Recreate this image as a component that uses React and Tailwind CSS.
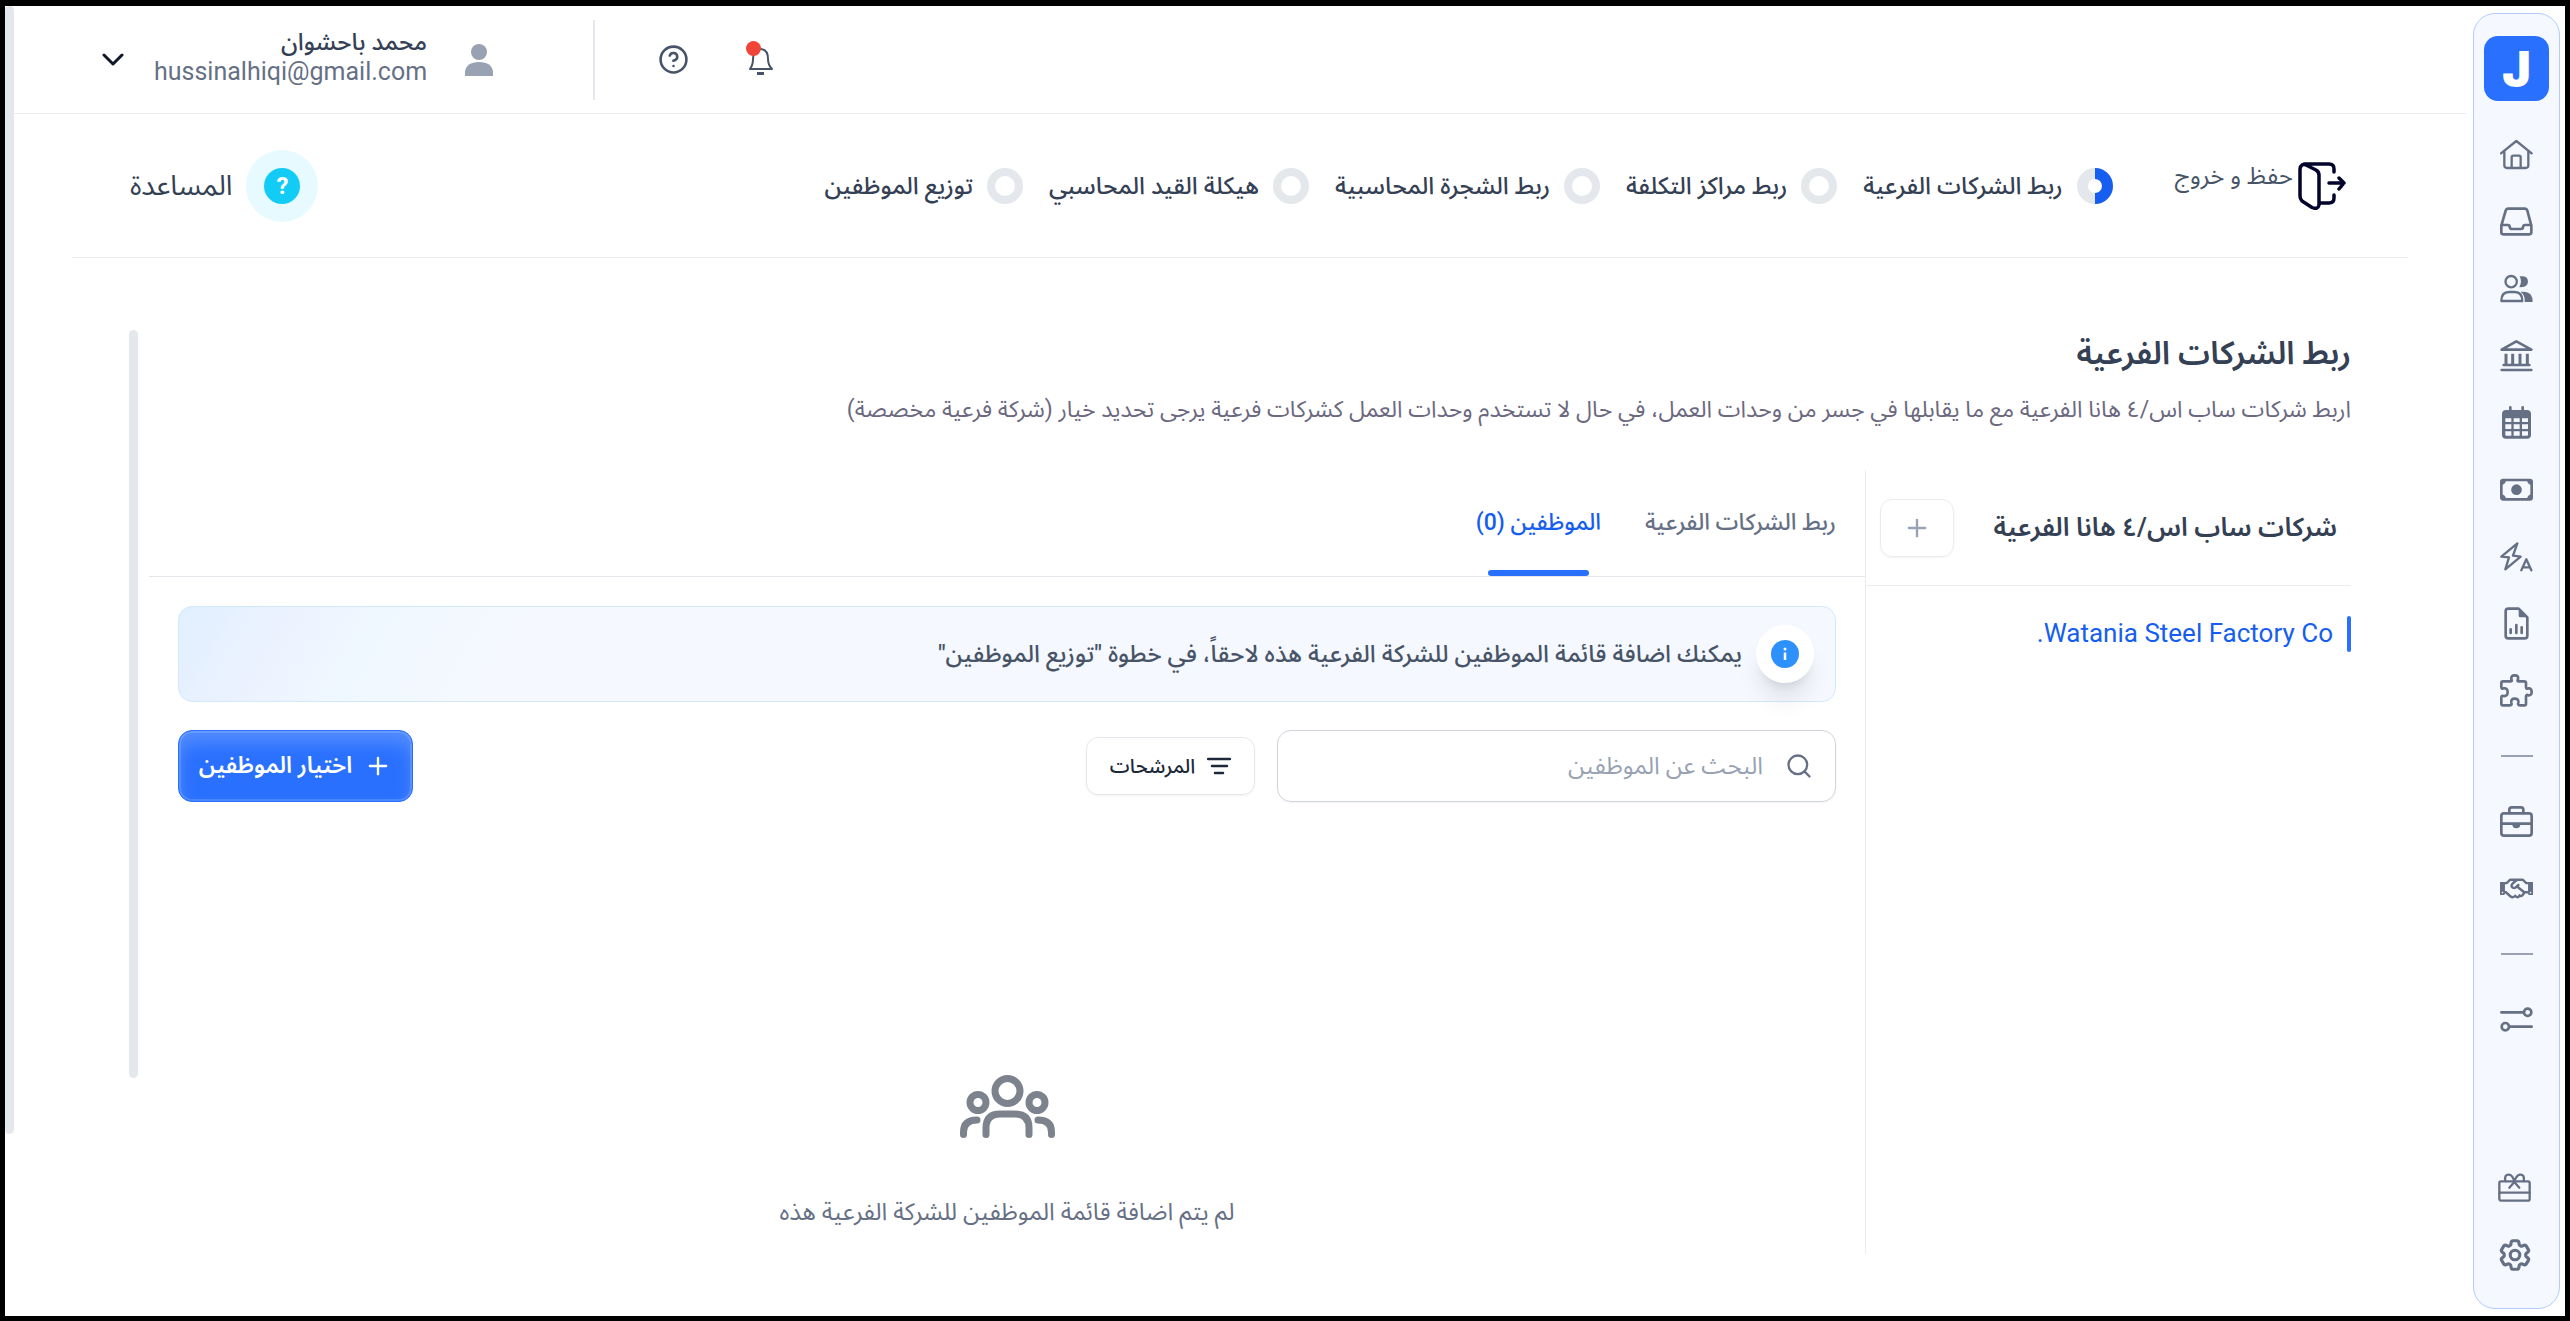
import { CircleHelp, Plus, Search } from 'lucide-react';
import { FaRegHandshake } from 'react-icons/fa';
import { HiOutlineCog6Tooth } from 'react-icons/hi2';

const steps = [
  { label: 'ربط الشركات الفرعية', active: true },
  { label: 'ربط مراكز التكلفة' },
  { label: 'ربط الشجرة المحاسبية' },
  { label: 'هيكلة القيد المحاسبي' },
  { label: 'توزيع الموظفين' },
];

const NavIcon = ({ children, width = 7 }) => (
  <svg viewBox="0 0 99 99" className="size-[33px]" fill="none" stroke="currentColor" strokeWidth={width} strokeLinecap="round" strokeLinejoin="round" aria-hidden="true">
    {children}
  </svg>
);

const HomeIcon = () => (
  <NavIcon>
    <path d="M3 46 49 9 95 46M13 40V82q0 8 8 8H77q8 0 8-8V40M35 90V58q0-5 5-5H57q5 0 5 5V90" />
  </NavIcon>
);

const InboxIcon = () => (
  <NavIcon width={8}>
    <path d="M4 62 17 17Q19 11 25 11H74Q80 11 82 17L94 62V82Q94 88 88 88H10Q4 88 4 82ZM4 60H24Q29 60 29 66 30 72 36 72H63Q69 72 69 66 70 60 75 60H94" />
  </NavIcon>
);

const PeopleIcon = () => (
  <NavIcon>
    <circle cx="33.500" cy="29" r="17" />
    <path d="M4 87Q4 60 27 60H44Q67 60 67 87Z" />
    <path d="M59 13Q84 10 84 29 84 46 58 46 67 29 59 13ZM62 59H72Q98 59 98 90H74Q76 70 62 59Z" fill="currentColor" stroke="none" />
  </NavIcon>
);

const BankIcon = () => (
  <NavIcon width={8}>
    <path d="M5 32 49 7 94 32Z" />
    <path d="M18 44V78M38 44V78M60 44V78M82 44V78" strokeLinecap="butt" strokeWidth="9" />
    <path d="M11 78H88M5 93H94" />
  </NavIcon>
);

const CalendarIcon = () => (
  <NavIcon>
    <path d="M31 4V20M68 4V20" strokeWidth="8" />
    <path
      d="M18 12H81Q93 12 93 24V86Q93 98 81 98H18Q6 98 6 86V24Q6 12 18 12ZM16 37V48H34V37ZM41 37V48H59V37ZM66 37V48H84V37ZM16 55V69H34V55ZM41 55V69H59V55ZM66 55V69H84V55ZM16 76V86Q16 89 19 89H34V76ZM41 76V89H59V76ZM66 76V89H81Q84 89 84 86V76Z"
      fill="currentColor"
      fillRule="evenodd"
      stroke="none"
    />
  </NavIcon>
);

const CashIcon = () => (
  <NavIcon width={8}>
    <rect x="4" y="21" width="91" height="58" rx="5" />
    <circle cx="49.500" cy="50" r="16" fill="currentColor" stroke="none" />
    <path d="M4 21H18Q17 34 4 36ZM95 21H81Q82 34 95 36ZM4 79H18Q17 66 4 64ZM95 79H81Q82 66 95 64Z" fill="currentColor" stroke="none" />
  </NavIcon>
);

const AutomationIcon = () => (
  <NavIcon>
    <path d="M52 10 4 50 27 52 16 88 62 50 39 47Z" />
    <path d="M64 91 79 58 94 91M69 82H89" />
  </NavIcon>
);

const ReportIcon = () => (
  <NavIcon width={8}>
    <path d="M56 5H25Q17 5 17 13V86Q17 94 25 94H74Q82 94 82 86V31Z" />
    <path d="M56 4V26Q56 31 61 31H84Z" fill="currentColor" stroke="none" />
    <path d="M32 67V78M49 54V78M65 61V78" />
  </NavIcon>
);

const PuzzleIcon = () => (
  <NavIcon width={8}>
    <path d="M4 27Q4 22 9 22H31Q38 22 34 16 32 4 44 4 57 4 54 16 50 22 57 22H73Q78 22 78 27V39Q79 47 85 43 95 42 95 54 95 65 85 64 79 60 78 67V89Q78 94 73 94H60Q52 94 55 86 57 74 44 74 32 74 34 86 37 94 30 94H9Q4 94 4 89V71Q4 64 10 66 23 68 23 54 23 41 10 43 4 46 4 38Z" />
  </NavIcon>
);

const BriefcaseIcon = () => (
  <NavIcon width={8}>
    <rect x="4" y="25" width="91" height="67" rx="8" />
    <path d="M28 24V14Q28 7 35 7H63Q70 7 70 14V24M4 56H95" />
    <path d="M37 58H61Q61 70 49 70 37 70 37 58Z" fill="currentColor" stroke="none" />
  </NavIcon>
);

const SlidersIcon = () => (
  <NavIcon width={8}>
    <path d="M4 28H70M28 71H95" />
    <circle cx="83" cy="28" r="11" />
    <circle cx="16" cy="71" r="11" />
  </NavIcon>
);

const GiftIcon = () => (
  <NavIcon>
    <rect x="4" y="31" width="91" height="58" rx="5" />
    <path d="M4 65H95M22 30Q18 10 33 11 45 13 49 33 54 13 66 11 81 10 77 30M49 33 34 50M49 33 64 50" />
  </NavIcon>
);

const Divider = () => (
  <li className="flex h-16 items-center justify-center">
    <hr className="w-8 border-t-2 border-[#98a2b3]" />
  </li>
);

const NavItem = ({ label, children }) => (
  <li>
    <a href="#" aria-label={label} className="flex h-[67px] items-center justify-center">
      {children}
    </a>
  </li>
);

const Sidebar = () => (
  <nav className="my-[7px] ml-[7px] mr-[5px] flex w-[87px] shrink-0 flex-col items-center rounded-[22px] border border-[#b2ccff] bg-[#f5f8ff] text-[#667085]">
    <a href="#" className="mt-[22px] flex size-[65px] items-center justify-center rounded-[14px] bg-[#2970ff] font-['Inter',sans-serif] text-5xl font-black text-white">
      J
    </a>
    <ul className="mt-5 flex flex-col">
      <NavItem label="الرئيسية"><HomeIcon /></NavItem>
      <NavItem label="الوارد"><InboxIcon /></NavItem>
      <NavItem label="الموظفين"><PeopleIcon /></NavItem>
      <NavItem label="المنشأة"><BankIcon /></NavItem>
      <NavItem label="التقويم"><CalendarIcon /></NavItem>
      <NavItem label="الرواتب"><CashIcon /></NavItem>
      <NavItem label="الأتمتة"><AutomationIcon /></NavItem>
      <NavItem label="التقارير"><ReportIcon /></NavItem>
      <NavItem label="التكاملات"><PuzzleIcon /></NavItem>
      <Divider />
      <NavItem label="الأعمال"><BriefcaseIcon /></NavItem>
      <NavItem label="الشركاء"><FaRegHandshake className="size-[33px]" /></NavItem>
      <Divider />
      <NavItem label="الضبط"><SlidersIcon /></NavItem>
    </ul>
    <ul className="mb-5 mt-auto flex flex-col pr-1">
      <NavItem label="المكافآت"><GiftIcon /></NavItem>
      <NavItem label="الإعدادات"><HiOutlineCog6Tooth className="size-[38px]" strokeWidth={2} /></NavItem>
    </ul>
  </nav>
);

const Header = () => (
  <header className="flex h-[108px] items-center justify-end border-b border-[#eaecf0] pl-[88px]">
    <button aria-label="الإشعارات" className="relative ml-[57px]">
      <svg viewBox="0 0 27 30" className="h-[30px] w-[27px] text-[#475467]" fill="none" stroke="currentColor" strokeWidth="2" strokeLinejoin="round" aria-hidden="true">
        <path d="M4 24H26Q22 20 22 14 22 4 14 4 7 4 7 14 7 20 4 24Z" />
        <path d="M11 28.500H18" strokeWidth="3" />
      </svg>
      <span className="absolute -top-1 left-0 size-[15px] rounded-full bg-[#f04438]" />
    </button>
    <button aria-label="مساعدة" className="ml-[63px] text-[#475467]">
      <CircleHelp className="size-[31px]" strokeWidth={2} />
    </button>
    <div className="ml-[100px] h-20 w-[2px] bg-[#e4e7ec]" />
    <svg viewBox="0 0 28 32" className="ml-[38px] h-8 w-7 text-[#98a2b3]" fill="currentColor" aria-hidden="true">
      <circle cx="14" cy="8" r="8" />
      <path d="M0 32V28Q1 18 14 18T28 28V32Z" />
    </svg>
    <div className="ml-[30px] pb-[6px] text-right">
      <p className="text-2xl leading-[30px] font-medium text-[#344054]">محمد باحشوان</p>
      <p className="text-[25px] leading-[30px] text-[#667085]">hussinalhiqi@gmail.com</p>
    </div>
    <button aria-label="قائمة المستخدم">
      <svg viewBox="0 0 22 13" className="h-[13px] w-[22px] text-[#101828]" fill="none" stroke="currentColor" strokeWidth="3" strokeLinecap="round" strokeLinejoin="round" aria-hidden="true">
        <path d="M2 2 11 11 20 2" />
      </svg>
    </button>
  </header>
);

const StepRing = ({ active }) => (
  <svg viewBox="0 0 36 36" className="size-9" fill="none" aria-hidden="true">
    <circle cx="18" cy="18" r={active ? 12.5 : 14} stroke="#e4e7ec" strokeWidth={active ? 11 : 8} />
    {active && <path d="M18 5.500A12.500 12.500 0 0 1 18 30.500" stroke="#155eef" strokeWidth="11" />}
  </svg>
);

const Stepper = () => (
  <div className="mx-[58px] flex h-[144px] items-center border-b border-[#eaecf0] pl-[58px] pr-[62px]">
    <button className="ml-[62px] flex items-start gap-[5px] text-2xl leading-7 text-[#475467]">
      <svg viewBox="0 0 48 48" className="size-12 text-[#02042b]" fill="none" stroke="currentColor" strokeWidth="3.500" strokeLinecap="round" strokeLinejoin="round" aria-hidden="true">
        <path d="M2 7V34Q2 37 4 39L14 45.500Q20 48 21 43V13Q21 10 18 8L8 3Q3 1 2 7M6 2H31Q36 2 36 7V10M36 33V36Q36 41 31 41H22M31 21H46M41 16 46 21 41 27" />
      </svg>
      حفظ و خروج
    </button>
    <ol className="flex items-center gap-[26px]">
      {steps.map((step) => (
        <li key={step.label} className="flex items-center gap-[14px] text-2xl font-medium text-[#344054]">
          <StepRing active={step.active} />
          {step.label}
        </li>
      ))}
    </ol>
    <button className="mr-auto flex items-center gap-[14px] text-[28px] text-[#344054]">
      <span className="flex size-[72px] items-center justify-center rounded-full bg-[#e6faff]">
        <span className="flex size-9 items-center justify-center rounded-full bg-[#12ccf5] text-2xl font-bold text-white">?</span>
      </span>
      المساعدة
    </button>
  </div>
);

const Companies = () => (
  <aside className="w-[486px] shrink-0 border-l border-[#eaecf0]">
    <div className="flex h-[116px] items-center justify-between border-b border-[#eaecf0] px-[14px]">
      <h2 className="text-[26px] font-semibold text-[#344054]">شركات ساب اس/٤ هانا الفرعية</h2>
      <button aria-label="إضافة" className="flex h-[58px] w-[74px] items-center justify-center rounded-xl border border-[#eaecf0] text-[#98a2b3] shadow-xs">
        <Plus className="size-7" strokeWidth={2} />
      </button>
    </div>
    <a href="#" className="mt-7 flex items-center gap-[14px] text-[26px] text-[#155eef]">
      <span className="h-9 w-1 rounded-full bg-[#2970ff]" />
      Watania Steel Factory Co.
    </a>
  </aside>
);

const EmptyState = () => (
  <div className="mt-[273px] flex flex-col items-center">
    <svg viewBox="0 0 95 63" className="h-[63px] w-[95px] text-[#7d838d]" fill="none" stroke="currentColor" strokeWidth="7" strokeLinecap="round" aria-hidden="true">
      <circle cx="47.500" cy="16" r="12.500" />
      <circle cx="18" cy="27.500" r="8" />
      <circle cx="77" cy="27.500" r="8" />
      <path d="M26 59.500V53Q26 39 40 39H55Q69 39 69 53V59.500M17 45Q3.500 45 3.500 57V59.500M78 45Q91.500 45 91.500 57V59.500" />
    </svg>
    <p className="mt-14 text-2xl leading-9 text-[#667085]">لم يتم اضافة قائمة الموظفين للشركة الفرعية هذه</p>
  </div>
);

const Employees = () => (
  <section className="flex-1">
    <div className="flex h-[107px] gap-[44px] border-b border-[#e4e7ec] pr-[29px] text-[23px] font-medium">
      <button className="text-[#667085]">ربط الشركات الفرعية</button>
      <button className="relative text-[#155eef]">
        الموظفين (0)
        <span className="absolute inset-x-3 bottom-0 h-[6px] rounded-sm bg-[#2970ff]" />
      </button>
    </div>
    <div className="px-[29px] pt-[29px]">
      <div className="flex h-24 items-center gap-[14px] rounded-[14px] border border-[#d1e9ff] bg-[linear-gradient(120deg,#e0efff_0px,#ebf2ff_90px,#f0f8ff_190px,#f5f8ff_300px)] pr-[21px]">
        <span className="flex size-[58px] items-center justify-center rounded-full bg-white shadow-xl">
          <svg viewBox="0 0 28 28" className="size-7" aria-hidden="true">
            <circle cx="14" cy="14" r="14" fill="#2e90fa" />
            <path d="M14 12.500V20" stroke="#fff" strokeWidth="2.500" />
            <circle cx="14" cy="9" r="1.500" fill="#fff" />
          </svg>
        </span>
        <p className="text-2xl font-medium text-[#475467]">يمكنك اضافة قائمة الموظفين للشركة الفرعية هذه لاحقاً، في خطوة "توزيع الموظفين"</p>
      </div>
      <div className="mt-7 flex items-center gap-[22px]">
        <label className="flex h-[72px] w-[559px] items-center gap-[22px] rounded-[14px] border border-[#d0d5dd] px-[22px] shadow-xs">
          <Search className="size-7 shrink-0 text-[#667085]" strokeWidth={2} />
          <input type="text" aria-label="البحث عن الموظفين" placeholder="البحث عن الموظفين" className="w-full text-2xl outline-none placeholder:text-[#98a2b3]" />
        </label>
        <button className="flex h-[58px] w-[169px] items-center justify-center gap-3 rounded-xl border border-[#e4e7ec] text-xl font-medium text-[#1d2939] shadow-xs">
          <svg viewBox="0 0 24 18" className="h-[18px] w-6" stroke="currentColor" strokeWidth="2.500" strokeLinecap="round" aria-hidden="true">
            <path d="M1 2H23M5 9H20M8 16H16" />
          </svg>
          المرشحات
        </button>
        <button className="mr-auto flex h-[72px] w-[235px] items-center justify-center gap-3 rounded-[14px] border border-[#2970ff] bg-[#2970ff] text-[23px] font-semibold text-white shadow-[inset_0_0_0_2px_rgba(255,255,255,0.15),inset_0_12px_18px_rgba(255,255,255,0.2)]">
          <Plus className="size-7" strokeWidth={2} />
          اختيار الموظفين
        </button>
      </div>
      <EmptyState />
    </div>
  </section>
);

const App = () => (
  <div dir="rtl" className="flex min-h-screen border-x-[5px] border-t-[6px] border-b-[5px] border-black bg-white font-['Roboto','Noto_Sans_Arabic','DejaVu_Sans',sans-serif]">
    <Sidebar />
    <div className="flex flex-1 flex-col">
      <Header />
      <Stepper />
      <div className="mx-[115px] mt-[72px] flex gap-[11px]">
        <main className="flex-1">
          <h1 className="text-[32px] leading-[46px] font-semibold text-[#344054]">ربط الشركات الفرعية</h1>
          <p className="mt-4 text-[23px] leading-9 text-[#6b6880]">
            اربط شركات ساب اس/٤ هانا الفرعية مع ما يقابلها في جسر من وحدات العمل، في حال لا تستخدم وحدات العمل كشركات فرعية يرجى تحديد خيار (شركة فرعية مخصصة)
          </p>
          <div className="mt-[42px] flex min-h-[784px]">
            <Companies />
            <Employees />
          </div>
        </main>
        <div className="h-[748px] w-[9px] rounded-full bg-[#e4e7ec]" />
      </div>
    </div>
    <div className="w-[9px] self-stretch pb-[182px]">
      <div className="h-full rounded-full bg-[#e4e7ec]" />
    </div>
  </div>
);

export default App;
